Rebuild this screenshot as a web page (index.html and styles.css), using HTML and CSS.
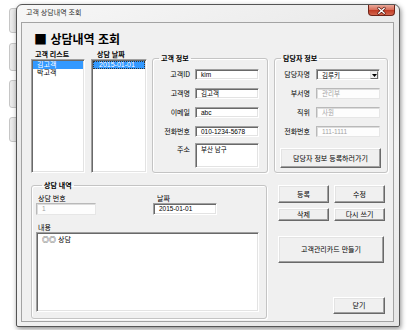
FILE: index.html
```html
<!DOCTYPE html>
<html lang="ko">
<head>
<meta charset="utf-8">
<title>고객 상담내역 조회</title>
<link rel="stylesheet" href="styles.css">
</head>
<body>
<div class="desktop">
  <div class="bgtab t1"></div>
  <div class="bgtab t2"></div>
  <div class="bgtab t3"></div>
  <div class="bgtab t4"></div>
  <div class="window">
    <div class="titlebar">
      <span class="title">고객 상담내역 조회</span>
      <span class="close"><svg width="27" height="11" viewBox="0 0 27 11"><path d="M10.5 3 L16.5 8.5 M16.5 3 L10.5 8.5" stroke="#5a1a10" stroke-width="3" stroke-linecap="round"/><path d="M10.5 3 L16.5 8.5 M16.5 3 L10.5 8.5" stroke="#fff" stroke-width="1.4" stroke-linecap="round"/></svg></span>
    </div>
    <div class="client">
      <h1 class="heading"><span class="sq">■</span> 상담내역 조회</h1>
      <div class="row-top">
        <div class="col-list list-a">
          <div class="col-label">고객 리스트</div>
          <ul class="listbox">
            <li class="sel">김고객</li>
            <li>박고객</li>
          </ul>
        </div>
        <div class="col-list list-b">
          <div class="col-label">상담 날짜</div>
          <ul class="listbox">
            <li class="sel focus">2015-01-01</li>
          </ul>
        </div>
        <fieldset class="group g-cust">
          <legend>고객 정보</legend>
          <div class="field"><span class="lbl">고객ID</span><div class="input">kim</div></div>
          <div class="field"><span class="lbl">고객명</span><div class="input">김고객</div></div>
          <div class="field"><span class="lbl">이메일</span><div class="input">abc</div></div>
          <div class="field"><span class="lbl">전화번호</span><div class="input">010-1234-5678</div></div>
          <div class="field tall"><span class="lbl">주소</span><div class="input area">부산 남구</div></div>
        </fieldset>
        <fieldset class="group g-staff">
          <legend>담당자 정보</legend>
          <div class="field"><span class="lbl">담당자명</span><div class="combo"><span class="combo-text">김루키</span><span class="drop"><svg width="5" height="3" viewBox="0 0 5 3"><path d="M0 0 H5 L2.5 3 Z" fill="#000"/></svg></span></div></div>
          <div class="field"><span class="lbl">부서명</span><div class="input dis">관리부</div></div>
          <div class="field"><span class="lbl">직위</span><div class="input dis">사원</div></div>
          <div class="field"><span class="lbl">전화번호</span><div class="input dis">111-1111</div></div>
          <button class="btn btn-staff">담당자 정보 등록하러가기</button>
        </fieldset>
      </div>
      <div class="row-bottom">
        <fieldset class="group g-counsel">
          <legend>상담 내역</legend>
          <div class="meta">
            <div class="meta-item m-no">
              <div class="meta-label">상담 번호</div>
              <div class="input dis">1</div>
            </div>
            <div class="meta-item m-date">
              <div class="meta-label">날짜</div>
              <div class="input">2015-01-01</div>
            </div>
          </div>
          <div class="content-label">내용</div>
          <div class="input memo">◎◎ 상담</div>
        </fieldset>
        <div class="actions">
          <div class="btn-row r1">
            <button class="btn">등록</button>
            <button class="btn">수정</button>
          </div>
          <div class="btn-row r2">
            <button class="btn">삭제</button>
            <button class="btn">다시 쓰기</button>
          </div>
          <button class="btn btn-card">고객관리카드 만들기</button>
          <button class="btn btn-close">닫기</button>
        </div>
      </div>
    </div>
  </div>
</div>
</body>
</html>
```
FILE: styles.css
```css
* { box-sizing: border-box; margin: 0; padding: 0; }
html, body { width: 420px; height: 330px; overflow: hidden; background: #fff; }
body {
  font-family: "Liberation Sans", "Noto Sans CJK KR", sans-serif;
  font-size: 7px;
  line-height: 9px;
  color: #000;
}
.desktop { position: relative; width: 420px; height: 330px; padding: 4px 0 0 16px; background: #fff; }
.bgtab {
  position: absolute; left: 9px; width: 12px;
  background: linear-gradient(90deg, #ececec, #dcdcdc);
  border: 1px solid #c6c6c6; border-radius: 3px;
}
.t1 { top: 8px; height: 25px; }
.t2 { top: 43px; height: 28px; }
.t3 { top: 80px; height: 28px; }
.t4 { top: 117px; height: 25px; }

.window {
  position: relative;
  width: 384px; height: 323px;
  border: 1px solid #555;
  border-radius: 6px 6px 2px 2px;
  background: linear-gradient(160deg, #f7f7f7 0%, #e9e9e9 35%, #f3f3f3 60%, #e6e6e6 100%);
  box-shadow: 1px 2px 5px rgba(0,0,0,0.45);
  display: flex; flex-direction: column;
  padding: 0 5px 4px 4px;
}
.titlebar { height: 17px; display: flex; align-items: center; padding-left: 5px; padding-bottom: 2px; }
.title { font-family: "Noto Sans CJK KR", sans-serif; font-size: 7px; color: #333; }
.close {
  position: absolute; top: 0; right: 4px;
  width: 27px; height: 11px;
  border: 1px solid #6e2418; border-top: none;
  border-radius: 0 0 4px 4px;
  background: linear-gradient(180deg, #e9a99a 0%, #d9705c 45%, #c23d26 55%, #d4664e 100%);
  display: flex;
}
.client {
  flex: 1;
  background: #f0f0f0;
  border: 1px solid #a3a3a3;
  display: flex; flex-direction: column;
}
.heading {
  height: 27px;
  padding: 8px 0 3px 12px;
  font-family: "Noto Sans CJK KR", sans-serif;
  font-size: 12px; line-height: 16px; font-weight: bold;
}
.sq { font-size: 13px; }

.row-top { display: flex; height: 123px; padding-left: 9px; }
.col-list { display: flex; flex-direction: column; }
.list-a { width: 54px; }
.list-b { width: 56px; margin-left: 6px; }
.col-label { height: 9px; font-weight: bold; padding-left: 4px; font-family: "Noto Sans CJK KR", sans-serif; line-height: 8px; }
.list-b .col-label { padding-left: 6px; }
.listbox {
  flex: 1; list-style: none;
  background: #fff;
  border: 1px solid; border-color: #a0a0a0 #fff #fff #a0a0a0;
  box-shadow: inset 1px 1px 0 #696969, inset -1px -1px 0 #e3e3e3;
  padding: 1px 1px 1px 1px;
}
.listbox li { height: 8px; line-height: 8px; padding-left: 4px; white-space: nowrap; }
.listbox li.sel { background: #3399ff; color: #fff; }
.listbox li.focus { outline: 1px dotted #333; outline-offset: -1px; padding-left: 6px; }

.group {
  border: 1px solid #c4c4c4;
  border-radius: 3px;
  box-shadow: inset 1px 1px 0 #fff, 1px 1px 0 #fff;
  min-width: 0;
  padding: 0;
}
.group legend {
  font-family: "Noto Sans CJK KR", sans-serif;
  font-weight: bold; line-height: 8px; height: 8px;
  padding: 0 2px; margin-left: 6px;
}
.g-cust { width: 116px; margin-left: 5px; margin-top: 4px; padding-top: 7px; }
.g-staff { width: 114px; margin-left: 6px; margin-top: 4px; padding-top: 7px; }
.field { display: flex; align-items: center; height: 11px; }
.field + .field { margin-top: 8px; }
.field.tall { margin-top: 6px; height: 25px; align-items: flex-start; }
.lbl { font-family: "Noto Sans CJK KR", sans-serif; text-align: right; flex: none; }
.g-cust .lbl { width: 37px; margin-right: 5px; }
.g-staff .lbl { width: 35px; margin-right: 6px; }
.field.tall .lbl { padding-top: 2px; }

.input {
  width: 64px; height: 11px;
  background: #fff;
  border: 1px solid; border-color: #a0a0a0 #fff #fff #a0a0a0;
  box-shadow: inset 1px 1px 0 #696969, inset -1px -1px 0 #e3e3e3;
  padding-left: 5px;
  font-size: 6.5px; line-height: 9px; white-space: nowrap;
}
.input.area { height: 25px; padding-top: 1px; }
.input.dis {
  color: #a3a3a3; background: #fdfdfd;
  border-color: #b9b9b9 #e6e6e6 #e6e6e6 #b9b9b9;
  box-shadow: inset 1px 1px 0 #dcdcdc;
}
.combo {
  width: 64px; height: 11px; display: flex; align-items: center;
  background: #fff;
  border: 1px solid; border-color: #a0a0a0 #fff #fff #a0a0a0;
  box-shadow: inset 1px 1px 0 #696969, inset -1px -1px 0 #e3e3e3;
  padding: 1px 1px 0 5px;
  font-size: 6.5px;
}
.combo-text { flex: 1; line-height: 9px; }
.drop {
  width: 8px; height: 8px;
  background: #f0f0f0;
  border: 1px solid; border-color: #e3e3e3 #696969 #696969 #e3e3e3;
  display: flex; align-items: center; justify-content: center;
}
.drop svg { display: block; }

.btn {
  display: flex; align-items: center; justify-content: center;
  background: #f0f0f0;
  border: 1px solid; border-color: #fff #696969 #696969 #fff;
  box-shadow: inset -1px -1px 0 #a0a0a0, inset 1px 1px 0 #e3e3e3;
  font-family: "Noto Sans CJK KR", sans-serif;
  font-size: 7px; line-height: 9px; color: #000;
  white-space: nowrap;
}
.btn-staff { width: 101px; height: 20px; margin: 11px 0 0 5px; }

.row-bottom { display: flex; padding-left: 9px; margin-top: 8px; }
.g-counsel { width: 236px; height: 138px; padding: 5px 0 0 4px; }
.g-counsel legend { margin-left: 6px; }
.meta { display: flex; }
.meta-label { height: 9px; line-height: 9px; font-family: "Noto Sans CJK KR", sans-serif; padding-left: 2px; }
.m-no .input { width: 60px; height: 12px; }
.m-date { margin-left: 57px; }
.m-date .meta-label { padding-left: 4px; }
.m-date .input { width: 64px; height: 12px; }
.content-label { margin-top: 7px; height: 10px; line-height: 10px; padding-left: 2px; font-family: "Noto Sans CJK KR", sans-serif; }
.input.memo { width: 223px; height: 80px; padding: 2px 0 0 5px; font-size: 7px; }

.actions { display: flex; flex-direction: column; width: 107px; margin-left: 11px; margin-top: 4px; }
.btn-row { display: flex; gap: 5px; }
.btn-row .btn { width: 51px; }
.r1 .btn { height: 18px; }
.r2 { margin-top: 5px; }
.r2 .btn { height: 13px; }
.btn-card { width: 106px; height: 27px; margin-top: 15px; }
.btn-close { width: 52px; height: 17px; margin-top: 34px; align-self: flex-end; }
```
